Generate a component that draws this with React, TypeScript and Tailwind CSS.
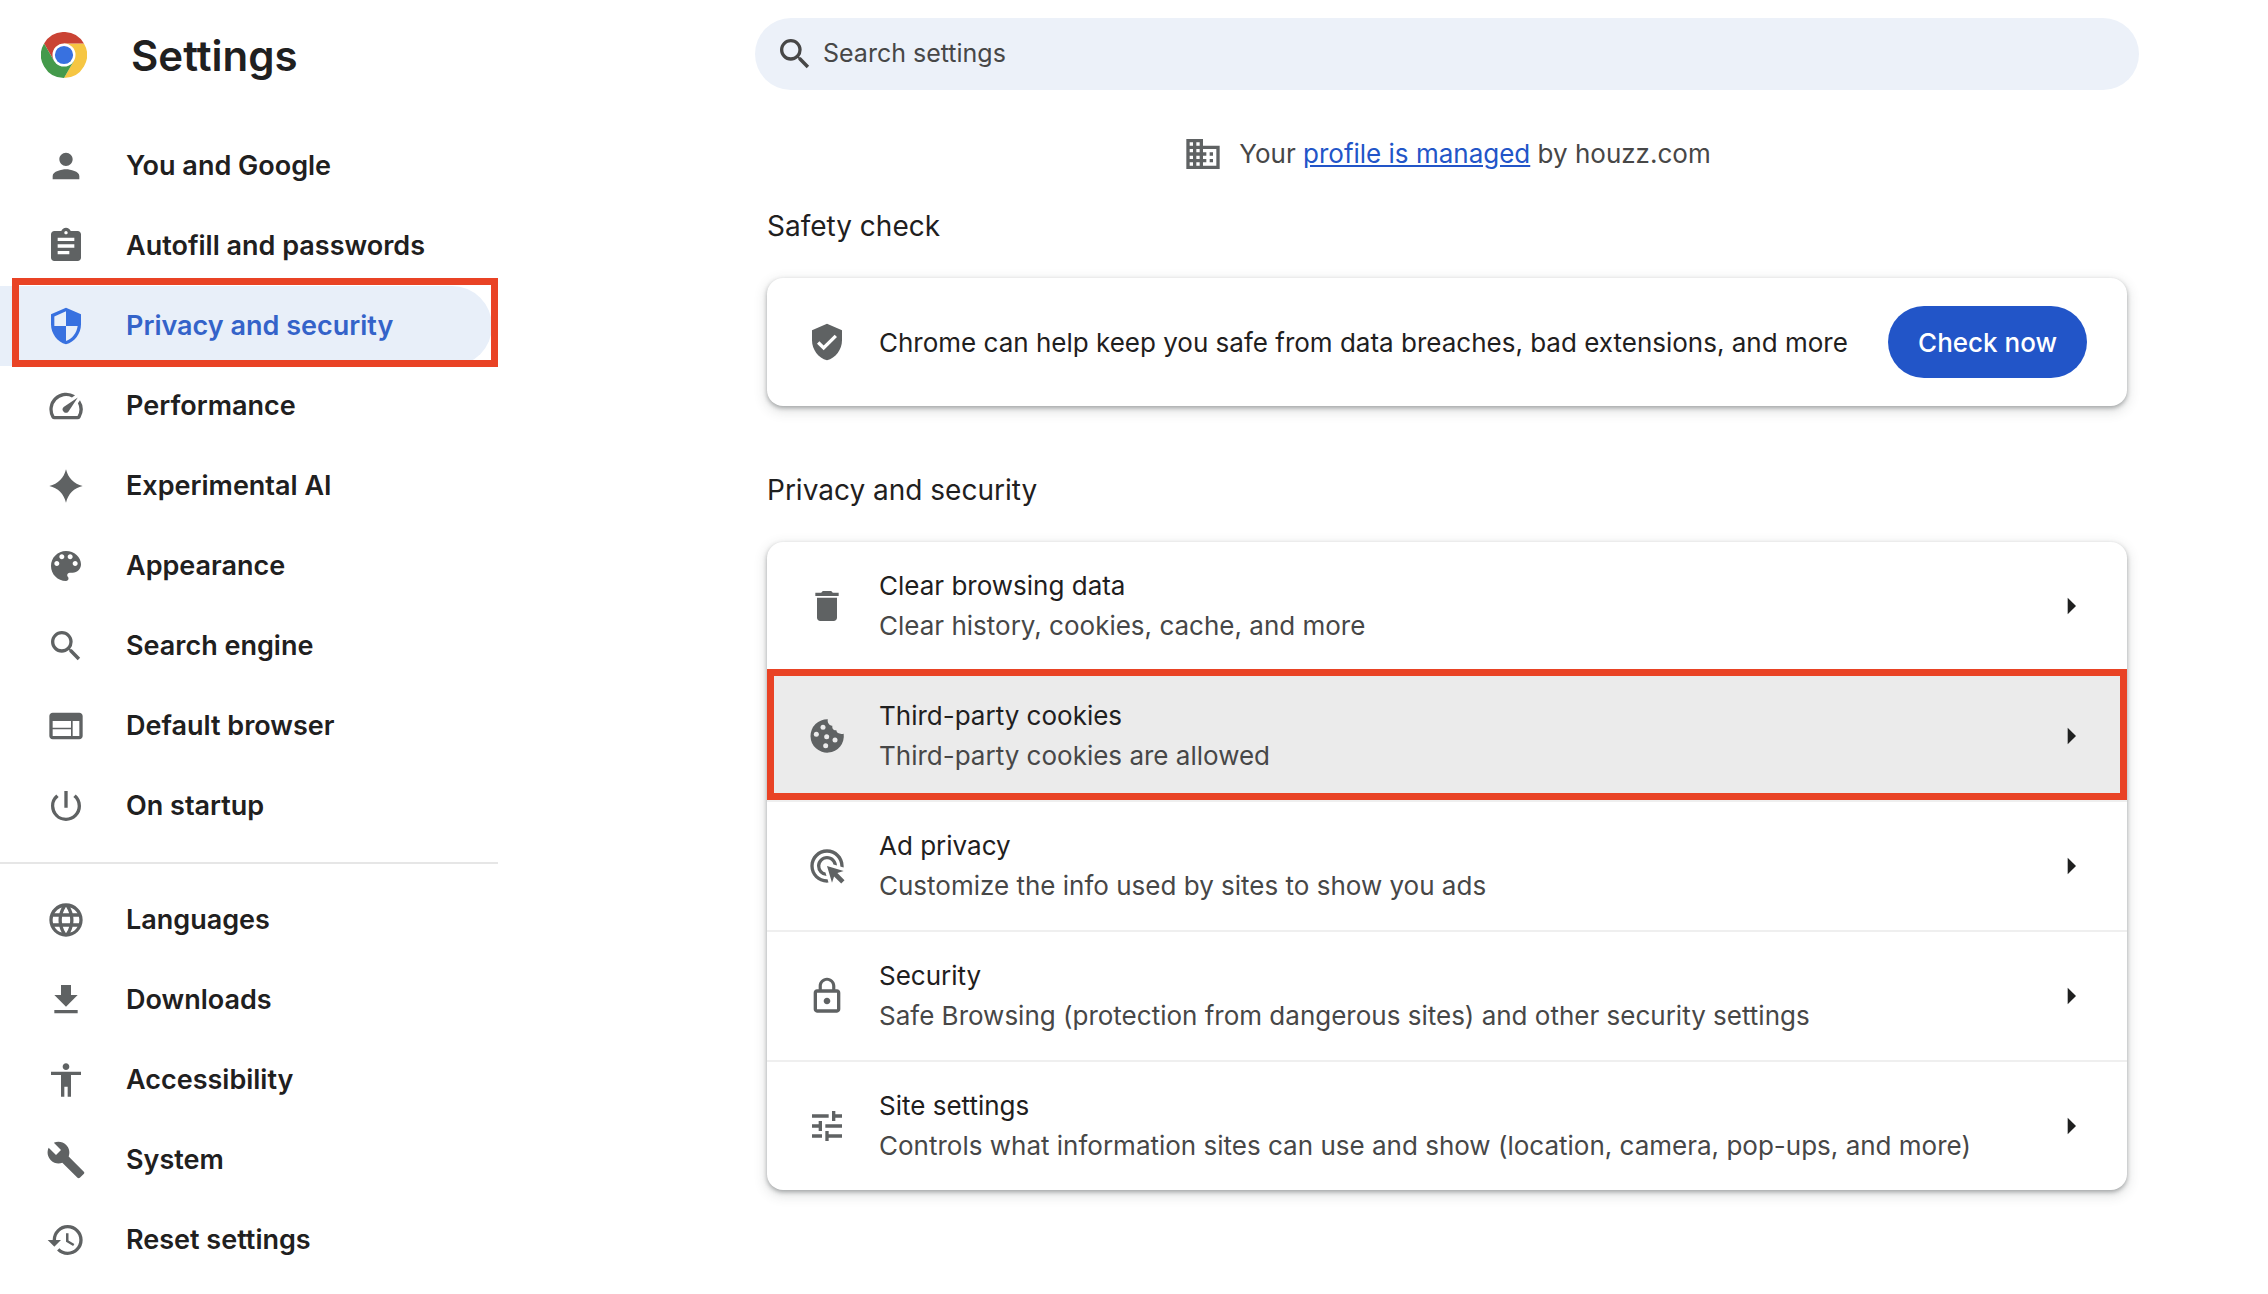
import React from "react";
import type { IconType } from "react-icons";
import {
  MdAccessibility,
  MdAdsClick,
  MdArrowRight,
  MdAssignment,
  MdBuild,
  MdDelete,
  MdDomain,
  MdGetApp,
  MdLanguage,
  MdLockOutline,
  MdPerson,
  MdPowerSettingsNew,
  MdRestore,
  MdSearch,
  MdSecurity,
  MdSpeed,
  MdTune,
  MdVerifiedUser,
  MdWeb,
} from "react-icons/md";

type IconProps = { className?: string };

type Item = {
  label: string;
  icon: IconType | React.FC<IconProps>;
  active?: boolean;
};

type Setting = {
  title: string;
  description: string;
  icon: IconType | React.FC<IconProps>;
  highlighted?: boolean;
};

const ChromeLogo = ({ className }: IconProps) => (
  <svg viewBox="0 0 48 48" className={className} aria-hidden="true">
    <path d="M24 12H44.8A24 24 0 0 1 24 48L34.4 30Z" fill="#f6c643" />
    <path d="M13.6 30 3.2 12A24 24 0 0 1 44.8 12H24Z" fill="#ca4334" />
    <path d="M34.4 30 24 48A24 24 0 0 1 3.2 12L13.6 30Z" fill="#449a4b" />
    <circle cx="24" cy="24" r="12" fill="#fff" />
    <circle cx="24" cy="24" r="9.5" fill="#3871e0" />
  </svg>
);

const SparkIcon = ({ className }: IconProps) => (
  <svg viewBox="0 0 24 24" className={className} fill="currentColor" aria-hidden="true">
    <path d="M12 2c1.2 5.2 4.8 8.8 10 10-5.2 1.2-8.8 4.8-10 10-1.2-5.2-4.8-8.8-10-10 5.2-1.2 8.8-4.8 10-10Z" />
  </svg>
);

const PaletteIcon = ({ className }: IconProps) => (
  <svg viewBox="0 0 24 24" className={className} fill="currentColor" aria-hidden="true">
    <path d="M12 3c-4.97 0-9 4.03-9 9s4.03 9 9 9c.83 0 1.5-.67 1.5-1.5 0-.39-.15-.74-.39-1.01-.23-.26-.38-.61-.38-.99 0-.83.67-1.5 1.5-1.5H16c2.76 0 5-2.24 5-5 0-4.42-4.03-8-9-8zm-5.5 9c-.83 0-1.5-.67-1.5-1.5S5.67 9 6.5 9 8 9.67 8 10.5 7.33 12 6.5 12zm3-4C8.67 8 8 7.33 8 6.5S8.67 5 9.5 5s1.5.67 1.5 1.5S10.33 8 9.5 8zm5 0c-.83 0-1.5-.67-1.5-1.5S13.67 5 14.5 5s1.5.67 1.5 1.5S15.33 8 14.5 8zm3 4c-.83 0-1.5-.67-1.5-1.5S16.67 9 17.5 9s1.5.67 1.5 1.5-.67 1.5-1.5 1.5z" />
  </svg>
);

const CookieIcon = ({ className }: IconProps) => (
  <svg viewBox="0 0 24 24" className={className} aria-hidden="true">
    <path
      fill="currentColor"
      d="M12.5 2A10 10 0 1 0 22 10.6C20 11 17.8 10.6 17.6 8.6 15.6 8.7 15 7.2 15.2 5.8 13.5 6 12 4 12.5 2Z"
    />
    <g fill="#ebebeb">
      <circle cx="9.6" cy="6.8" r="1.5" />
      <circle cx="5.6" cy="11" r="1.5" />
      <circle cx="11.8" cy="12.4" r="1.5" />
      <circle cx="16.8" cy="14.4" r="1.5" />
      <circle cx="11.2" cy="17.8" r="1.5" />
    </g>
  </svg>
);

const mainItems: Item[] = [
  { label: "You and Google", icon: MdPerson },
  { label: "Autofill and passwords", icon: MdAssignment },
  { label: "Privacy and security", icon: MdSecurity, active: true },
  { label: "Performance", icon: MdSpeed },
  { label: "Experimental AI", icon: SparkIcon },
  { label: "Appearance", icon: PaletteIcon },
  { label: "Search engine", icon: MdSearch },
  { label: "Default browser", icon: MdWeb },
  { label: "On startup", icon: MdPowerSettingsNew },
];

const moreItems: Item[] = [
  { label: "Languages", icon: MdLanguage },
  { label: "Downloads", icon: MdGetApp },
  { label: "Accessibility", icon: MdAccessibility },
  { label: "System", icon: MdBuild },
  { label: "Reset settings", icon: MdRestore },
];

const settings: Setting[] = [
  {
    title: "Clear browsing data",
    description: "Clear history, cookies, cache, and more",
    icon: MdDelete,
  },
  {
    title: "Third-party cookies",
    description: "Third-party cookies are allowed",
    icon: CookieIcon,
    highlighted: true,
  },
  {
    title: "Ad privacy",
    description: "Customize the info used by sites to show you ads",
    icon: MdAdsClick,
  },
  {
    title: "Security",
    description: "Safe Browsing (protection from dangerous sites) and other security settings",
    icon: MdLockOutline,
  },
  {
    title: "Site settings",
    description: "Controls what information sites can use and show (location, camera, pop-ups, and more)",
    icon: MdTune,
  },
];

const NavItem = ({ item }: { item: Item }) => {
  const Icon = item.icon;

  return (
    <li className="relative">
      <a
        href="#"
        aria-current={item.active ? "page" : undefined}
        className={
          item.active
            ? "mr-1.5 flex h-20 items-center gap-10 rounded-r-full bg-[#e8eff9] pl-[46px] text-[#3463c9]"
            : "mr-1.5 flex h-20 items-center gap-10 pl-[46px] text-[#1f2020]"
        }
      >
        <Icon
          className={
            item.active ? "h-10 w-10 shrink-0 text-[#3871e0]" : "h-10 w-10 shrink-0 text-[#5f6263]"
          }
        />
        <span className="text-[27px] font-semibold">{item.label}</span>
      </a>

      {item.active && (
        <div className="pointer-events-none absolute -top-2 -bottom-px left-3 right-0 border-[7px] border-[#e94325]" />
      )}
    </li>
  );
};

const SettingRow = ({ setting }: { setting: Setting }) => {
  const Icon = setting.icon;

  return (
    <li className="relative">
      <a
        href="#"
        className={
          setting.highlighted
            ? "flex h-32 items-center bg-[#ebebeb] pl-10 pr-9"
            : "flex h-32 items-center pl-10 pr-9"
        }
      >
        <Icon className="h-10 w-10 shrink-0 text-[#5f6263]" />
        <span className="ml-8 flex-1">
          <span className="block text-[26px] leading-10 text-[#1f2020]">{setting.title}</span>
          <span className="block text-[26px] leading-10 text-[#474747]">{setting.description}</span>
        </span>
        <MdArrowRight className="h-10 w-10 shrink-0 text-[#1f2020]" />
      </a>

      {setting.highlighted && (
        <div className="pointer-events-none absolute inset-x-0 -top-[3px] bottom-0 border-[7px] border-[#e94325]" />
      )}
    </li>
  );
};

const App = () => {
  return (
    <div className="grid min-h-screen grid-cols-[498px_minmax(0,1fr)] bg-white font-['Inter','Liberation_Sans',sans-serif] text-[#1f2020]">
      <aside>
        <div className="flex h-[110px] items-center gap-11 pl-[41px]">
          <ChromeLogo className="h-[46px] w-[46px]" />
          <h1 className="text-[42px] font-semibold">Settings</h1>
        </div>

        <nav aria-label="Settings" className="mt-4">
          <ul>
            {mainItems.map((item) => (
              <NavItem key={item.label} item={item} />
            ))}
          </ul>
          <hr className="my-4 border-t-2 border-[#e6e6e6]" />
          <ul>
            {moreItems.map((item) => (
              <NavItem key={item.label} item={item} />
            ))}
          </ul>
        </nav>
      </aside>

      <main className="pl-32">
        <label className="mx-auto mt-[18px] flex h-[72px] max-w-[1384px] items-center gap-2 rounded-full bg-[#ecf1f9] pl-5">
          <MdSearch className="h-10 w-10 shrink-0 text-[#474747]" />
          <input
            type="search"
            aria-label="Search settings"
            placeholder="Search settings"
            className="flex-1 bg-transparent text-[25px] outline-none placeholder:text-[#474747]"
          />
        </label>

        <div className="mx-auto max-w-[1360px]">
          <div className="mt-11 flex items-center justify-center gap-4 text-[26px] leading-10 text-[#474747]">
            <MdDomain className="h-10 w-10 text-[#5f6263]" />
            <p>
              Your{" "}
              <a href="#" className="text-[#2255c8] underline">
                profile is managed
              </a>{" "}
              by houzz.com
            </p>
          </div>

          <h2 className="mt-8 text-[28px] leading-10">Safety check</h2>
          <div className="mt-8 flex h-32 items-center rounded-2xl px-10 shadow-[0_2px_4px_rgba(60,64,67,0.4),0_4px_12px_2px_rgba(60,64,67,0.15)]">
            <MdVerifiedUser className="h-10 w-10 shrink-0 text-[#5f6263]" />
            <p className="ml-8 flex-1 text-[26px]">
              Chrome can help keep you safe from data breaches, bad extensions, and more
            </p>
            <button className="h-[72px] rounded-full bg-[#2255c8] px-[30px] text-[26px] font-medium text-white">
              Check now
            </button>
          </div>

          <h2 className="mt-16 text-[28px] leading-10">Privacy and security</h2>
          <ul className="mt-8 divide-y-2 divide-[#efefef] rounded-2xl shadow-[0_2px_4px_rgba(60,64,67,0.4),0_4px_12px_2px_rgba(60,64,67,0.15)]">
            {settings.map((setting) => (
              <SettingRow key={setting.title} setting={setting} />
            ))}
          </ul>
        </div>
      </main>
    </div>
  );
};

export default App;
